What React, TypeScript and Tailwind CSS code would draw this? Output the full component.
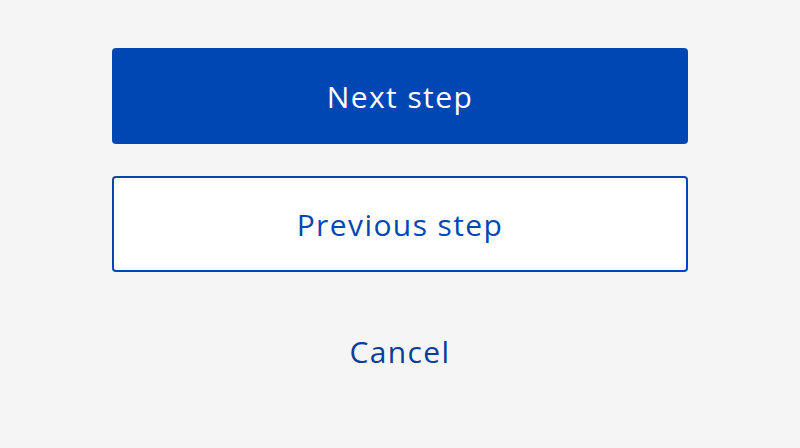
export default function App() {
  return (
    <div className="w-[800px] h-[448px] bg-[#f5f5f5] flex flex-col items-center pt-[48px] font-['Open_Sans',sans-serif] tracking-[1.4px]">
      <button className="w-[576px] h-[96px] rounded-[4px] bg-[#0047b3] text-white text-[30px] flex items-center justify-center">
        Next step
      </button>
      <button className="mt-[32px] w-[576px] h-[96px] rounded-[4px] border-2 border-[#0047b3] bg-white text-[#0047b3] text-[30px] flex items-center justify-center">
        Previous step
      </button>
      <button className="mt-[62px] text-[30px] text-[#0a3d99] leading-[36px]">
        Cancel
      </button>
    </div>
  );
}
